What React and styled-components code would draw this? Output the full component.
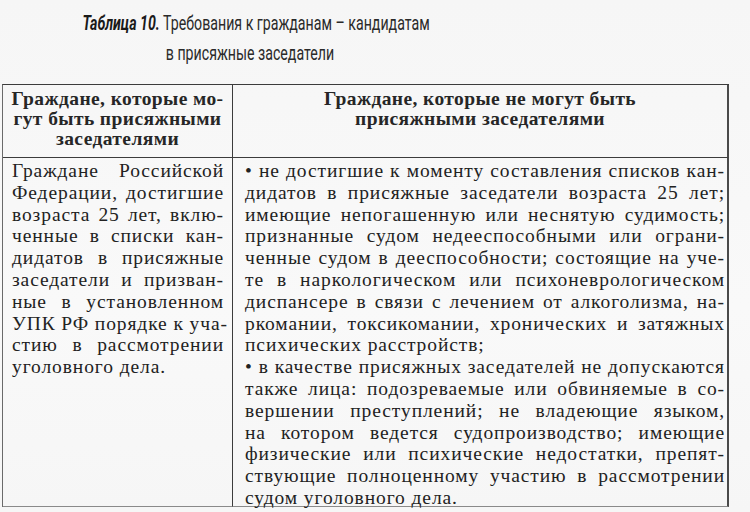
import React from 'react';
import styled, { createGlobalStyle } from 'styled-components';

const GlobalStyle = createGlobalStyle`
  html, body {
    margin: 0;
    padding: 0;
    background: #f7f7f7;
  }
`;

const Page = styled.div`
  width: 750px;
  height: 512px;
  overflow: hidden;
  background: linear-gradient(180deg, #f6f6f6 0%, #f9f9f9 60%, #f6f6f6 100%);
  padding: 8px 0 0 2px;
  box-sizing: border-box;
`;

const Title = styled.div`
  width: 496px;
  text-align: center;
  font-family: Roboto, "Liberation Sans", sans-serif;
  font-size: 21px;
  line-height: 30px;
  color: #2a2a2a;
  margin-bottom: 16px;
  transform: scaleX(0.675);
  transform-origin: 248px 0;
  white-space: nowrap;
`;

const TitleLabel = styled.span`
  font-weight: bold;
  font-style: italic;
  color: #1a1a1a;
`;

const Table = styled.div`
  display: grid;
  width: max-content;
  grid-template-columns: 230px 496px;
  grid-template-rows: 73px 349px;
  border-top: 1px solid #3c3c3c;
  border-left: 1px solid #6a6a6a;
  font-family: "Liberation Serif", "DejaVu Serif", serif;
  color: #222;
`;

const Cell = styled.div`
  box-sizing: border-box;
  border-right: ${p => (p.$right ? '2px solid #4a4a4a' : '1px solid #3c3c3c')};
  border-bottom: ${p => (p.$head ? '1px solid #3c3c3c' : '1px solid #8a8a8a')};
  padding: ${p => (p.$head ? '4px 4px 0 4px' : p.$right ? '2px 2px 0 12px' : '2px 8px 0 9px')};
`;

const HeadLine = styled.div`
  text-align: center;
  font-size: 19.5px;
  font-weight: bold;
  line-height: 20px;
  letter-spacing: 0.4px;
  color: #262626;
  white-space: nowrap;
`;

const Line = styled.div`
  font-size: 19.5px;
  line-height: 21.8px;
  letter-spacing: 0.9px;
  text-align: ${p => (p.$last ? 'left' : 'justify')};
  text-align-last: ${p => (p.$last ? 'left' : 'justify')};
  white-space: nowrap;
`;

const leftHead = ['Граждане, которые мо-', 'гут быть присяжными', 'заседателями'];
const rightHead = ['Граждане, которые не могут быть', 'присяжными заседателями'];

const leftBody = [
  'Граждане Российской',
  'Федерации, достигшие',
  'возраста 25 лет, вклю-',
  'ченные в списки кан-',
  'дидатов в присяжные',
  'заседатели и призван-',
  'ные в установленном',
  'УПК РФ порядке к уча-',
  'стию в рассмотрении',
  { text: 'уголовного дела.', last: true },
];

const rightBody = [
  '• не достигшие к моменту составления списков кан-',
  'дидатов в присяжные заседатели возраста 25 лет;',
  'имеющие непогашенную или неснятую судимость;',
  'признанные судом недееспособными или ограни-',
  'ченные судом в дееспособности; состоящие на уче-',
  'те в наркологическом или психоневрологическом',
  'диспансере в связи с лечением от алкоголизма, на-',
  'ркомании, токсикомании, хронических и затяжных',
  { text: 'психических расстройств;', last: true },
  '• в качестве присяжных заседателей не допускаются',
  'также лица: подозреваемые или обвиняемые в со-',
  'вершении преступлений; не владеющие языком,',
  'на котором ведется судопроизводство; имеющие',
  'физические или психические недостатки, препят-',
  'ствующие полноценному участию в рассмотрении',
  { text: 'судом уголовного дела.', last: true },
];

function renderLines(lines) {
  return lines.map((l, i) => {
    const item = typeof l === 'string' ? { text: l } : l;
    return <Line key={i} $last={item.last}>{item.text}</Line>;
  });
}

export default function App() {
  return (
    <Page>
      <GlobalStyle />
      <Title>
        <TitleLabel>Таблица 10.</TitleLabel> Требования к гражданам – кандидатам
        <br />
        в присяжные заседатели
      </Title>
      <Table>
        <Cell $head>
          {leftHead.map(t => <HeadLine key={t}>{t}</HeadLine>)}
        </Cell>
        <Cell $head $right>
          {rightHead.map(t => <HeadLine key={t}>{t}</HeadLine>)}
        </Cell>
        <Cell>{renderLines(leftBody)}</Cell>
        <Cell $right>{renderLines(rightBody)}</Cell>
      </Table>
    </Page>
  );
}
